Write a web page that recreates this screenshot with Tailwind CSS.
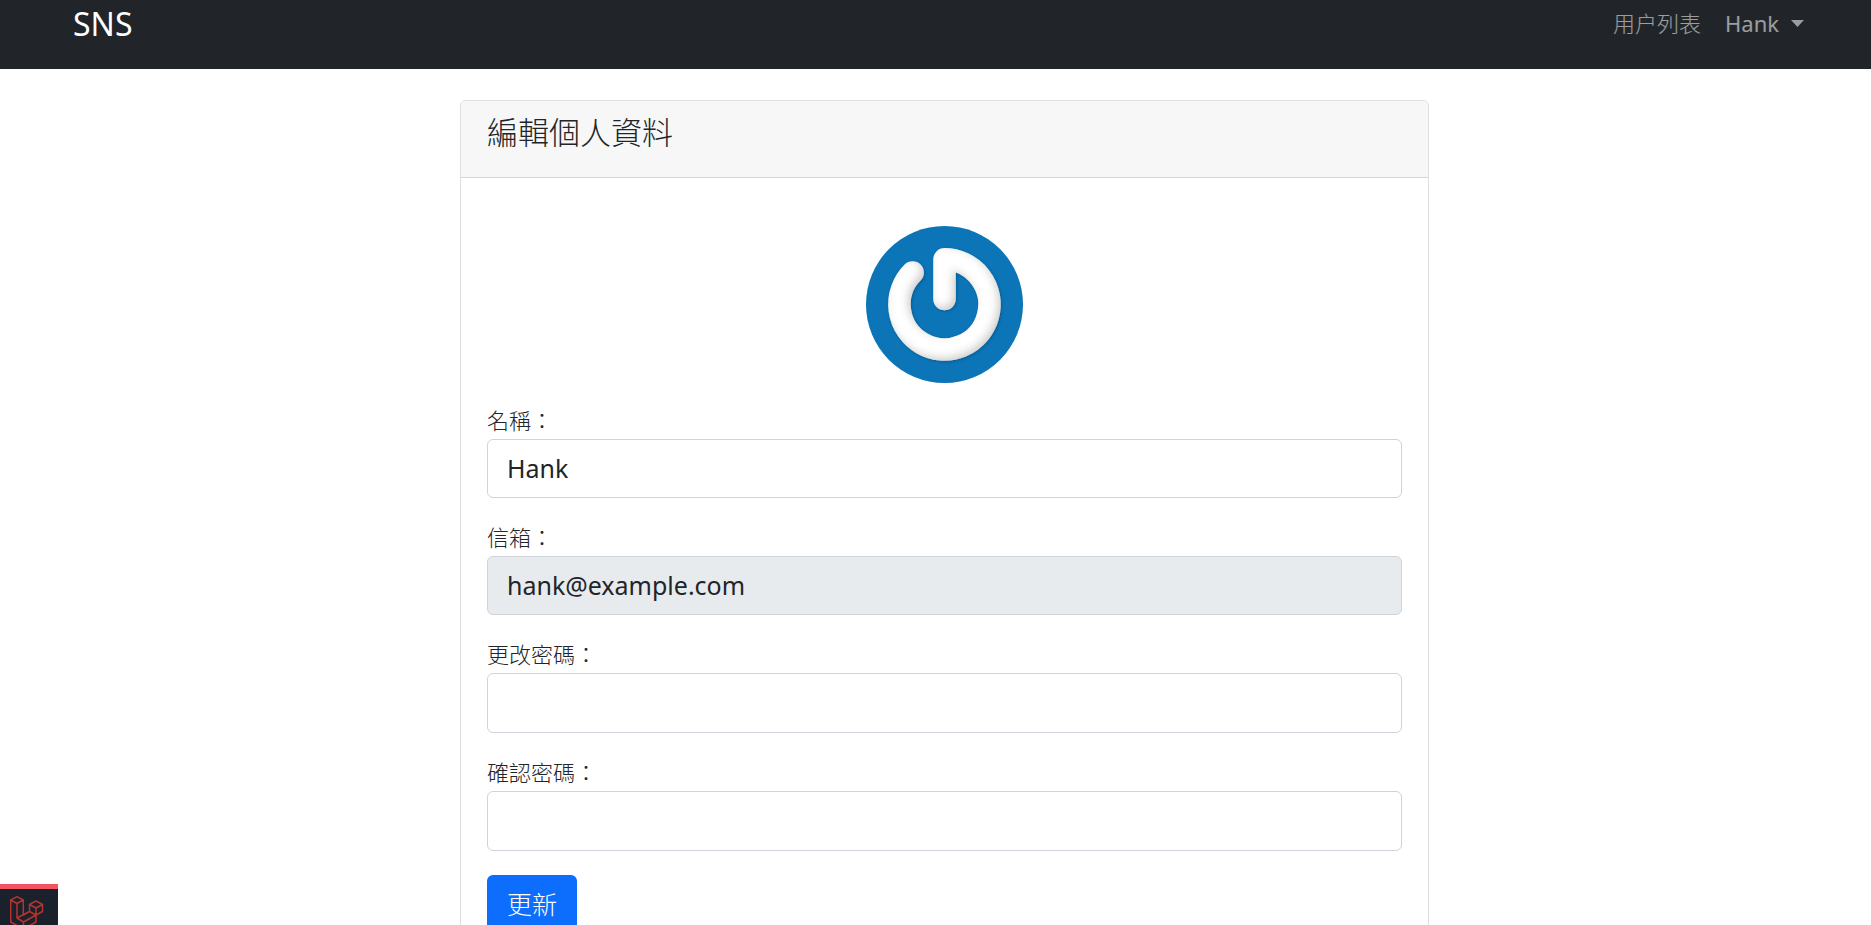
<!DOCTYPE html>
<html lang="zh-Hant">
<head>
<meta charset="utf-8">
<meta name="viewport" content="width=device-width, initial-scale=1">
<title>SNS</title>
<script src="https://cdn.jsdelivr.net/npm/@tailwindcss/browser@4"></script>
</head>
<body class="bg-white text-[#212529] font-['Noto_Sans','Noto_Sans_CJK_TC',sans-serif]">
<nav class="flex items-start justify-between bg-[#212529] pl-[73px] pr-[67px] pb-[25px]">
  <a href="#" class="pt-1 text-[32px] leading-10 text-white">SNS</a>
  <ul class="flex items-center gap-6 pt-1 text-[22px] leading-[38px] text-white/55">
    <li><a href="#" class="font-light">用户列表</a></li>
    <li>
      <button type="button" class="flex items-center gap-3">Hank
        <svg class="h-[7px] w-[13px]" viewBox="0 0 13 7" fill="currentColor" aria-hidden="true"><path d="M0 0h13L6.500 7z"/></svg>
      </button>
    </li>
  </ul>
</nav>
<main class="flex justify-center pt-[31px] pl-4.5">
  <section class="w-full max-w-[969px] rounded-md border border-[#dfdfdf]">
    <header class="rounded-t-md border-b border-[#d5d5d5] bg-[#f7f7f7] px-[26px] pt-[11px] pb-[25px]">
      <h1 class="text-[31px] leading-10 font-light">編輯個人資料</h1>
    </header>
    <div class="px-[26px] pt-12 pb-6">
      <a href="#" class="mx-auto mb-5 block w-[157px]" aria-label="Hank">
        <svg class="block w-full" viewBox="0 0 157 157">
          <defs>
            <filter id="bevel" filterUnits="userSpaceOnUse" x="0" y="0" width="157" height="157">
              <feComponentTransfer in="SourceAlpha" result="inv"><feFuncA type="table" tableValues="1 0"/></feComponentTransfer>
              <feGaussianBlur in="inv" stdDeviation="4"/>
              <feOffset dx="-3" dy="-3" result="edge"/>
              <feFlood flood-color="#6b6360" flood-opacity="0.450"/>
              <feComposite in2="edge" operator="in"/>
              <feComposite in2="SourceAlpha" operator="in" result="shade"/>
              <feGaussianBlur in="SourceAlpha" stdDeviation="1.500"/>
              <feOffset dx="1" dy="1" result="drop"/>
              <feFlood flood-color="#06406b" flood-opacity="0.500"/>
              <feComposite in2="drop" operator="in" result="outer"/>
              <feMerge><feMergeNode in="outer"/><feMergeNode in="SourceGraphic"/><feMergeNode in="shade"/></feMerge>
            </filter>
          </defs>
          <circle cx="78.500" cy="78.500" r="78.500" fill="#0b75b7"/>
          <path d="M78.500 73V33.400A45 45 0 1 1 46.600 46.600" fill="none" stroke="#fff" stroke-width="22.600" stroke-linecap="round" stroke-linejoin="round" filter="url(#bevel)"/>
        </svg>
      </a>
      <form class="flex flex-col gap-[22px]">
        <div class="flex flex-col gap-0.5">
          <label for="name" class="text-[22px] leading-[34px] font-light">名稱：</label>
          <input id="name" type="text" value="Hank" class="h-[59px] w-full rounded-md border border-[#ced4da] bg-white px-[19px] pb-0.5 text-[25px]">
        </div>
        <div class="flex flex-col gap-0.5">
          <label for="email" class="text-[22px] leading-[34px] font-light">信箱：</label>
          <input id="email" type="text" value="hank@example.com" disabled class="h-[59px] w-full rounded-md border border-[#ced4da] bg-[#e8ebee] px-[19px] pb-0.5 text-[25px]">
        </div>
        <div class="flex flex-col gap-0.5">
          <label for="password" class="text-[22px] leading-[34px] font-light">更改密碼：</label>
          <input id="password" type="password" class="h-[60px] w-full rounded-md border border-[#ced4da] bg-white px-[19px] pb-0.5 text-[25px]">
        </div>
        <div class="flex flex-col gap-0.5">
          <label for="confirm" class="text-[22px] leading-[34px] font-light">確認密碼：</label>
          <input id="confirm" type="password" class="h-[60px] w-full rounded-md border border-[#ced4da] bg-white px-[19px] pb-0.5 text-[25px]">
        </div>
        <button type="submit" class="mt-0.5 h-[59px] self-start rounded-md bg-[#0d6efd] px-5 text-[25px] font-light text-white">更新</button>
      </form>
    </div>
  </section>
</main>
<a href="#" aria-label="Laravel" class="fixed bottom-0 left-0 block h-[41px] w-[58px] overflow-hidden border-t-[5px] border-[#f4545f] bg-[#1b212c]">
  <svg class="mt-[7px] ml-[10px] h-[34px] w-[34px]" viewBox="0 0 34 34" fill="none" stroke="#b5332d" stroke-width="1.500" stroke-linejoin="round">
    <path d="M0.700 4L7 0.700L13.300 4L7 7.500ZM0.700 4V26L13.500 33L26 26V19L32.500 15.500V8.500L26 5L19.500 8.500V15.500L13.300 19V4M7 7.500V22L13.500 26V33M7 22L19.500 15.500L26 19L13.500 26M19.500 8.500L26 12L32.500 8.500M26 12V19"/>
  </svg>
</a>
</body>
</html>
